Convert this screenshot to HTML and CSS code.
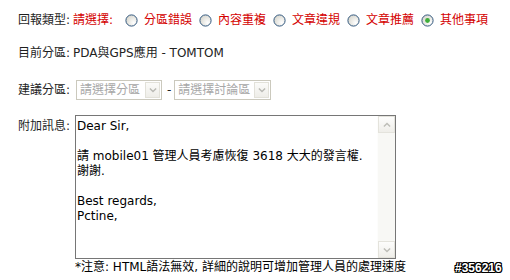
FILE: index.html
```html
<!DOCTYPE html>
<html>
<head>
<meta charset="utf-8">
<link rel="stylesheet" href="styles.css">
</head>
<body>
<div class="form">
  <div class="row r1">
    <span class="lbl">回報類型:</span>
    <span class="red">請選擇:</span>
    <span class="opt first"><svg class="radio" viewBox="0 0 13 13"><defs><radialGradient id="g1" cx="0.7" cy="0.7" r="0.8"><stop offset="0" stop-color="#ffffff"/><stop offset="1" stop-color="#d6d5cc"/></radialGradient></defs><circle cx="6.5" cy="6.5" r="5.6" fill="url(#g1)" stroke="#32587e" stroke-width="1"/></svg><span class="red">分區錯誤</span></span>
    <span class="opt"><svg class="radio" viewBox="0 0 13 13"><circle cx="6.5" cy="6.5" r="5.6" fill="url(#g1)" stroke="#32587e" stroke-width="1"/></svg><span class="red">內容重複</span></span>
    <span class="opt"><svg class="radio" viewBox="0 0 13 13"><circle cx="6.5" cy="6.5" r="5.6" fill="url(#g1)" stroke="#32587e" stroke-width="1"/></svg><span class="red">文章違規</span></span>
    <span class="opt"><svg class="radio" viewBox="0 0 13 13"><circle cx="6.5" cy="6.5" r="5.6" fill="url(#g1)" stroke="#32587e" stroke-width="1"/></svg><span class="red">文章推薦</span></span>
    <span class="opt"><svg class="radio" viewBox="0 0 13 13"><circle cx="6.5" cy="6.5" r="5.6" fill="url(#g1)" stroke="#32587e" stroke-width="1"/><circle cx="6.5" cy="6.5" r="2.4" fill="#3fae3a"/></svg><span class="red">其他事項</span></span>
  </div>
  <div class="row r2">
    <span class="lbl">目前分區:</span>
    <span class="val">PDA與GPS應用 - TOMTOM</span>
  </div>
  <div class="row r3">
    <span class="lbl">建議分區:</span>
    <div class="sel s1"><span class="stxt">請選擇分區</span><span class="sbtn"><svg viewBox="0 0 9 6" class="chev"><path d="M1 1.2 L4.5 4.6 L8 1.2" fill="none" stroke="#b9b9b3" stroke-width="1.6"/></svg></span></div>
    <span class="dash">-</span>
    <div class="sel s2"><span class="stxt">請選擇討論區</span><span class="sbtn"><svg viewBox="0 0 9 6" class="chev"><path d="M1 1.2 L4.5 4.6 L8 1.2" fill="none" stroke="#b9b9b3" stroke-width="1.6"/></svg></span></div>
  </div>
  <div class="row r4">
    <span class="lbl lbl4">附加訊息:</span>
    <div class="ta">
      <div class="tatext">Dear Sir,

請 mobile01 管理人員考慮恢復 3618 大大的發言權.
謝謝.

Best regards,
Pctine,</div>
      <div class="sb">
        <div class="sbb"><svg viewBox="0 0 9 6" class="chev"><path d="M1 4.6 L4.5 1.2 L8 4.6" fill="none" stroke="#bdbdb7" stroke-width="1.6"/></svg></div>
        <div class="track"></div>
        <div class="sbb"><svg viewBox="0 0 9 6" class="chev"><path d="M1 1.2 L4.5 4.6 L8 1.2" fill="none" stroke="#bdbdb7" stroke-width="1.6"/></svg></div>
      </div>
    </div>
  </div>
  <div class="note">*注意: HTML語法無效, 詳細的說明可增加管理人員的處理速度</div>
</div>
<div class="wm">#356216</div>
</body>
</html>
```
FILE: styles.css
```css
html, body {
  margin: 0;
  background: #ffffff;
}
body {
  font-family: "DejaVu Sans", "Noto Sans CJK TC", sans-serif;
  font-size: 12px;
  color: #1e1e1e;
  position: relative;
  width: 510px;
  height: 280px;
  overflow: hidden;
}
.form {
  padding: 12px 0 0 18px;
}
.row {
  display: flex;
  align-items: center;
  line-height: 16px;
  white-space: nowrap;
}
.lbl {
  width: 55px;
  flex: none;
}
.red {
  color: #d40000;
}
.opt {
  display: flex;
  align-items: center;
  margin-left: 7px;
}
.opt.first {
  margin-left: 12px;
}
.radio {
  width: 13px;
  height: 13px;
  margin-right: 6px;
  flex: none;
}
.r2 {
  margin-top: 17px;
}
.val {
  color: #222;
}
.r3 {
  margin-top: 19px;
}
.sel {
  display: flex;
  align-items: center;
  height: 20px;
  box-sizing: border-box;
  border: 1px solid #cbc9bd;
  color: #a8a8a8;
  padding-left: 3px;
  background: #ffffff;
}
.s1 {
  width: 86px;
  margin-left: 3px;
}
.s2 {
  width: 97px;
}
.stxt {
  flex: 1;
}
.sbtn {
  width: 15px;
  height: 16px;
  margin-right: 1px;
  box-sizing: border-box;
  border: 1px solid #e2e1d9;
  background: linear-gradient(#fbfbf9, #eeede8);
  display: flex;
  align-items: center;
  justify-content: center;
}
.chev {
  width: 8px;
  height: 6px;
}
.dash {
  margin: 0 3px 0 5px;
  color: #222;
}
.r4 {
  margin-top: 15px;
  align-items: flex-start;
}
.lbl4 {
  padding-top: 3px;
}
.ta {
  display: flex;
  width: 321px;
  height: 144px;
  box-sizing: border-box;
  border: 1px solid #767676;
  margin-left: 2px;
  background: #ffffff;
}
.tatext {
  flex: 1;
  padding: 3px 1px;
  line-height: 15px;
  white-space: pre;
  color: #000;
  overflow: hidden;
}
.sb {
  width: 17px;
  flex: none;
  display: flex;
  flex-direction: column;
  background: #f8f8f5;
  border-left: 1px solid #fdfdfc;
}
.sbb {
  height: 17px;
  box-sizing: border-box;
  border: 1px solid #e4e3dc;
  background: linear-gradient(#fdfdfc, #efeee9);
  display: flex;
  align-items: center;
  justify-content: center;
}
.track {
  flex: 1;
}
.note {
  margin-left: 57px;
  line-height: 16px;
  color: #000;
  white-space: nowrap;
}
.wm {
  position: absolute;
  left: 455px;
  top: 261px;
  font-family: "Liberation Sans", sans-serif;
  font-weight: bold;
  font-size: 12px;
  line-height: 14px;
  color: #ffffff;
  text-shadow: 1px 0 0 #000, -1px 0 0 #000, 0 1px 0 #000, 0 -1px 0 #000, 1px 1px 0 #000, -1px -1px 0 #000, 1px -1px 0 #000, -1px 1px 0 #000;
}
```
